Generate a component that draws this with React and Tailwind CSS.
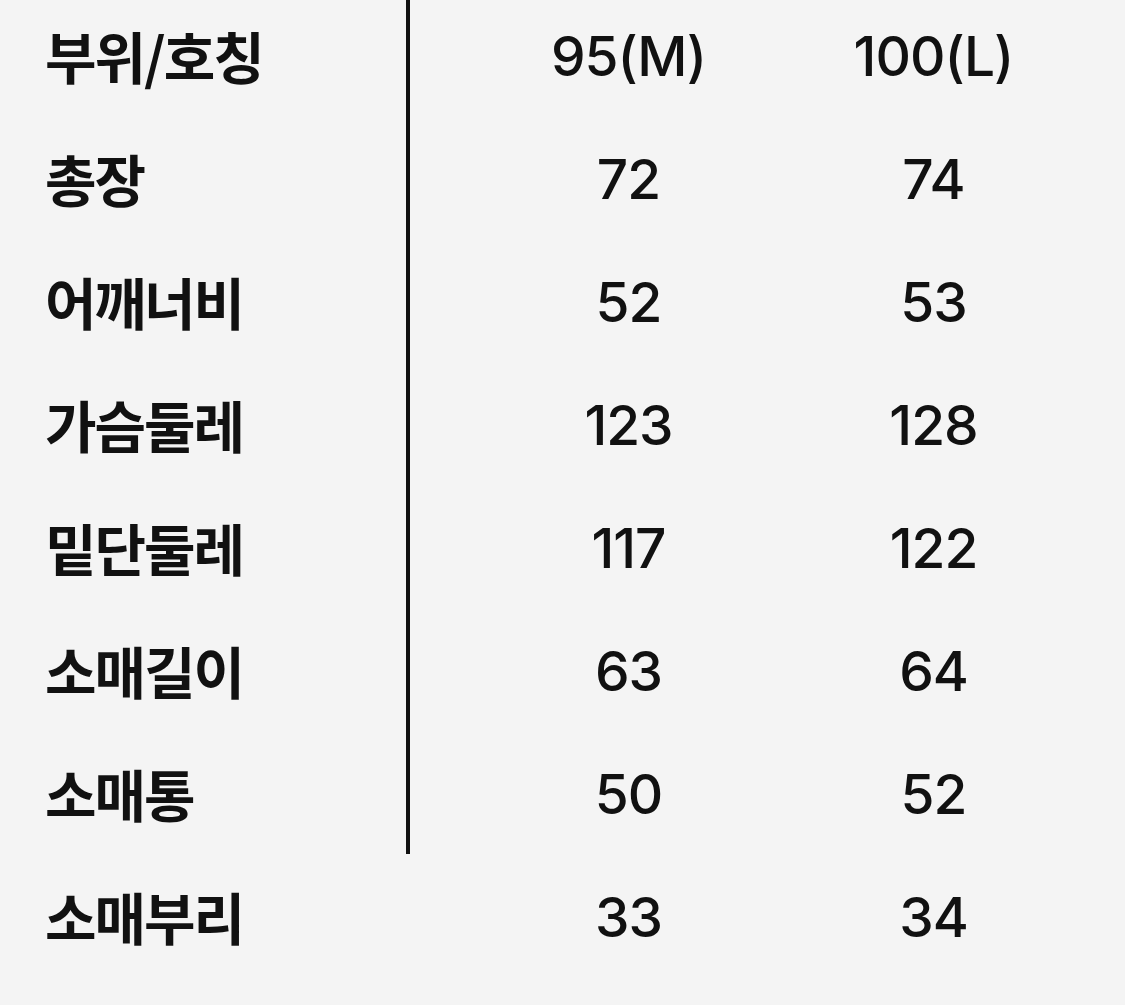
import React from "react";

const rows = [
  ["부위/호칭", "95(M)", "100(L)"],
  ["총장", "72", "74"],
  ["어깨너비", "52", "53"],
  ["가슴둘레", "123", "128"],
  ["밑단둘레", "117", "122"],
  ["소매길이", "63", "64"],
  ["소매통", "50", "52"],
  ["소매부리", "33", "34"],
];

const kr = { fontFamily: '"Noto Sans CJK KR", "Noto Sans", sans-serif' };
const num = { fontFamily: 'Inter, "Noto Sans CJK KR", sans-serif' };

export default function App() {
  return (
    <div className="w-[1125px] h-[1005px] overflow-hidden bg-[#f4f4f4] text-[#111]">
      <div className="-mt-[7px] flex flex-col">
        {rows.map((r, i) => (
          <div key={i} className="flex h-[123px] items-center">
            <div
              style={kr}
              className={
                "flex h-full w-[410px] items-center pl-[45px] text-[56px] font-bold tracking-[-2px] " +
                (i < 7 ? "border-r-[4px] border-[#111]" : "border-r-[4px] border-transparent")
              }
            >
              {r[0]}
            </div>
            <div style={num} className="ml-[66px] w-[305px] pt-[4px] text-center text-[55px] font-medium tracking-[-1px]">
              {r[1]}
            </div>
            <div style={num} className="w-[305px] pt-[4px] text-center text-[55px] font-medium tracking-[-1px]">
              {r[2]}
            </div>
          </div>
        ))}
      </div>
    </div>
  );
}
